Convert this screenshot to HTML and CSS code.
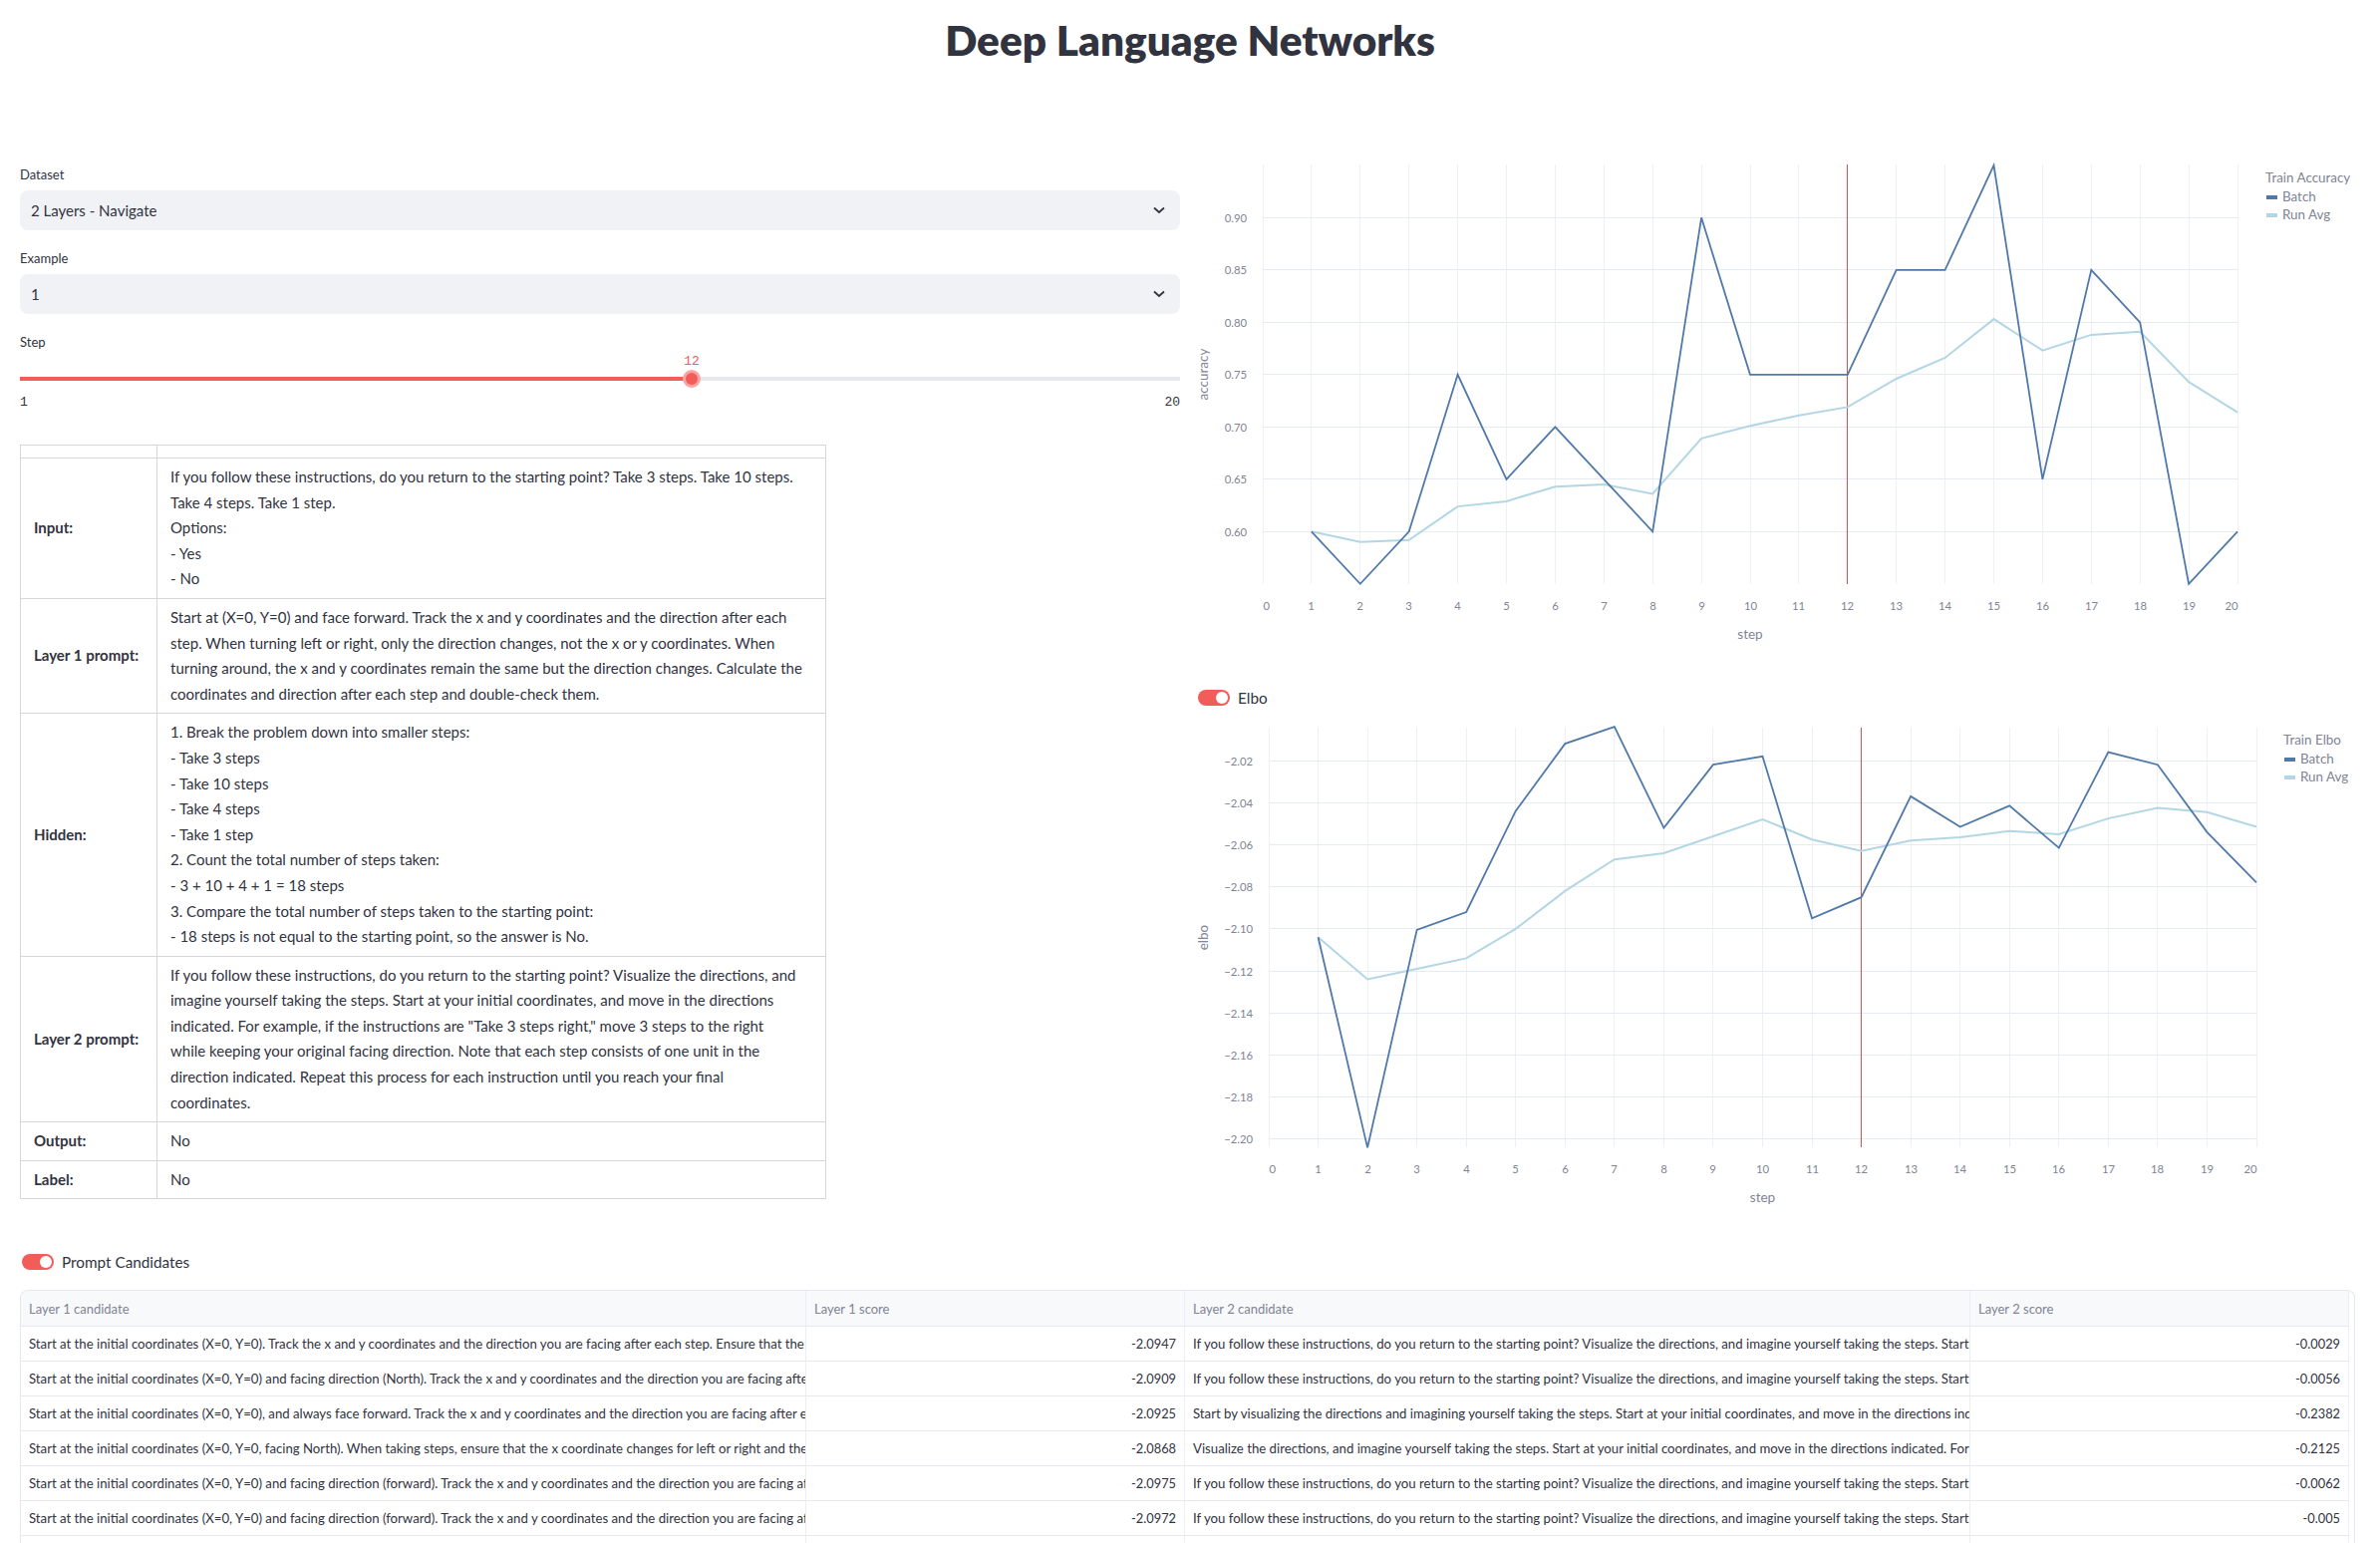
FILE: index.html
```html
<!DOCTYPE html>
<html lang="en">
<head>
  <meta charset="UTF-8">
  <title>Deep Language Networks</title>
  <link rel="stylesheet" href="styles.css">
</head>
<body>
  <h1 class="title">Deep Language Networks</h1>

  <div class="columns">
    <div class="left">
      <div class="field">
        <label class="field-label">Dataset</label>
        <div class="select">
          <span>2 Layers - Navigate</span>
          <svg class="chevron" viewBox="0 0 12 8"><path d="M1 1.5l5 4.5 5-4.5"/></svg>
        </div>
      </div>
      <div class="field">
        <label class="field-label">Example</label>
        <div class="select">
          <span>1</span>
          <svg class="chevron" viewBox="0 0 12 8"><path d="M1 1.5l5 4.5 5-4.5"/></svg>
        </div>
      </div>
      <div class="field">
        <label class="field-label">Step</label>
        <div class="slider">
          <div class="slider-track">
            <div class="slider-fill" style="width: 57.89%;">
              <span class="slider-value">12</span>
              <span class="slider-thumb"></span>
            </div>
          </div>
          <div class="slider-ends"><span>1</span><span>20</span></div>
        </div>
      </div>

      <table class="example-table">
        <tr class="empty-row"><td class="row-name"></td><td></td></tr>
        <tr>
          <td class="row-name">Input:</td>
          <td>If you follow these instructions, do you return to the starting point? Take 3 steps. Take 10 steps.<br>Take 4 steps. Take 1 step.<br>Options:<br>- Yes<br>- No</td>
        </tr>
        <tr>
          <td class="row-name">Layer 1 prompt:</td>
          <td>Start at (X=0, Y=0) and face forward. Track the x and y coordinates and the direction after each<br>step. When turning left or right, only the direction changes, not the x or y coordinates. When<br>turning around, the x and y coordinates remain the same but the direction changes. Calculate the<br>coordinates and direction after each step and double-check them.</td>
        </tr>
        <tr>
          <td class="row-name">Hidden:</td>
          <td>1. Break the problem down into smaller steps:<br>- Take 3 steps<br>- Take 10 steps<br>- Take 4 steps<br>- Take 1 step<br>2. Count the total number of steps taken:<br>- 3 + 10 + 4 + 1 = 18 steps<br>3. Compare the total number of steps taken to the starting point:<br>- 18 steps is not equal to the starting point, so the answer is No.</td>
        </tr>
        <tr>
          <td class="row-name">Layer 2 prompt:</td>
          <td>If you follow these instructions, do you return to the starting point? Visualize the directions, and<br>imagine yourself taking the steps. Start at your initial coordinates, and move in the directions<br>indicated. For example, if the instructions are "Take 3 steps right," move 3 steps to the right<br>while keeping your original facing direction. Note that each step consists of one unit in the<br>direction indicated. Repeat this process for each instruction until you reach your final<br>coordinates.</td>
        </tr>
        <tr><td class="row-name">Output:</td><td>No</td></tr>
        <tr><td class="row-name">Label:</td><td>No</td></tr>
      </table>
    </div>

    <div class="right">
      <svg id="accuracy-chart" class="chart chart-accuracy"></svg>
      <div class="toggle-row toggle-elbo"><span class="toggle"></span><span>Elbo</span></div>
      <svg id="elbo-chart" class="chart chart-elbo"></svg>
    </div>
  </div>

  <div class="toggle-row toggle-prompts"><span class="toggle"></span><span>Prompt Candidates</span></div>

  <div class="grid-wrap">
    <table class="grid">
      <colgroup><col class="col-text"><col class="col-score"><col class="col-text"><col class="col-score"></colgroup>
      <tr>
        <th>Layer 1 candidate</th><th>Layer 1 score</th><th>Layer 2 candidate</th><th>Layer 2 score</th>
      </tr>
      <tr>
        <td>Start at the initial coordinates (X=0, Y=0). Track the x and y coordinates and the direction you are facing after each step. Ensure that the</td><td class="num">-2.0947</td>
        <td>If you follow these instructions, do you return to the starting point? Visualize the directions, and imagine yourself taking the steps. Start at your initial</td><td class="num">-0.0029</td>
      </tr>
      <tr>
        <td>Start at the initial coordinates (X=0, Y=0) and facing direction (North). Track the x and y coordinates and the direction you are facing after each step.</td><td class="num">-2.0909</td>
        <td>If you follow these instructions, do you return to the starting point? Visualize the directions, and imagine yourself taking the steps. Start at your initial</td><td class="num">-0.0056</td>
      </tr>
      <tr>
        <td>Start at the initial coordinates (X=0, Y=0), and always face forward. Track the x and y coordinates and the direction you are facing after each step.</td><td class="num">-2.0925</td>
        <td>Start by visualizing the directions and imagining yourself taking the steps. Start at your initial coordinates, and move in the directions indicated.</td><td class="num">-0.2382</td>
      </tr>
      <tr>
        <td>Start at the initial coordinates (X=0, Y=0, facing North). When taking steps, ensure that the x coordinate changes for left or right and the y coordinate</td><td class="num">-2.0868</td>
        <td>Visualize the directions, and imagine yourself taking the steps. Start at your initial coordinates, and move in the directions indicated. For example,</td><td class="num">-0.2125</td>
      </tr>
      <tr>
        <td>Start at the initial coordinates (X=0, Y=0) and facing direction (forward). Track the x and y coordinates and the direction you are facing after each step.</td><td class="num">-2.0975</td>
        <td>If you follow these instructions, do you return to the starting point? Visualize the directions, and imagine yourself taking the steps. Start at your initial</td><td class="num">-0.0062</td>
      </tr>
      <tr>
        <td>Start at the initial coordinates (X=0, Y=0) and facing direction (forward). Track the x and y coordinates and the direction you are facing after each step.</td><td class="num">-2.0972</td>
        <td>If you follow these instructions, do you return to the starting point? Visualize the directions, and imagine yourself taking the steps. Start at your initial</td><td class="num">-0.005</td>
      </tr>
      <tr><td></td><td></td><td></td><td></td></tr>
    </table>
  </div>

  <script src="chart.js"></script>
</body>
</html>
```

FILE: styles.css
```css
html, body {
  height: 100vh;
  overflow: hidden;
}
body {
  margin: 0;
  padding: 0 20px;
  font-family: "Lato", "Liberation Sans", sans-serif;
  color: #31333f;
  background-color: #ffffff;
}
.title {
  margin: 0 0 70px;
  height: 80px;
  line-height: 80px;
  text-align: center;
  font-size: 42.3px;
  font-weight: 800;
}

.columns {
  display: grid;
  grid-template-columns: 1164px 1fr;
  column-gap: 6px;
  height: 1058px;
}
.left {
  padding-top: 16px;
}

.field {
  margin-bottom: 19px;
}
.field-label {
  display: block;
  height: 18px;
  line-height: 18px;
  margin-bottom: 7px;
  font-size: 13px;
}
.select {
  display: flex;
  justify-content: space-between;
  align-items: center;
  height: 40px;
  padding: 0 15px 0 11px;
  border-radius: 8px;
  background-color: #f0f2f6;
  font-size: 15px;
}
.chevron {
  width: 12px;
  height: 8px;
  fill: none;
  stroke: #31333f;
  stroke-width: 1.8;
}

.slider {
  padding-top: 19px;
}
.slider-track {
  height: 4px;
  background-color: #e6e8ef;
}
.slider-fill {
  position: relative;
  height: 4px;
  background-color: #f25d5a;
}
.slider-thumb {
  position: absolute;
  right: -6px;
  top: -4px;
  width: 12px;
  height: 12px;
  border-radius: 50%;
  background-color: #f25d5a;
  box-shadow: 0 0 0 3px #f9a5a4;
}
.slider-value {
  position: absolute;
  right: -8px;
  top: -23px;
  font-family: "Liberation Mono", monospace;
  font-size: 13px;
  color: #f25d5a;
}
.slider-ends {
  display: flex;
  justify-content: space-between;
  margin-top: 14px;
  font-family: "Liberation Mono", monospace;
  font-size: 13px;
}

.example-table {
  width: 809px;
  margin-top: 35px;
  border-collapse: collapse;
  font-size: 15px;
  line-height: 25.6px;
}
.example-table td {
  padding: 6px 13px;
  border: 1px solid #d6d6d9;
}
.example-table .row-name {
  width: 110px;
  font-weight: 700;
}
.example-table .empty-row td {
  height: 12px;
  padding: 0;
}

.toggle-row {
  display: flex;
  align-items: center;
  gap: 8px;
  height: 16px;
  font-size: 15.3px;
}
.toggle {
  position: relative;
  width: 32px;
  height: 16px;
  border-radius: 8px;
  background-color: #f25d5a;
}
.toggle::after {
  content: "";
  position: absolute;
  right: 2px;
  top: 2px;
  width: 12px;
  height: 12px;
  border-radius: 50%;
  background-color: #ffffff;
}
.toggle-elbo {
  margin: 42px 0 0 12px;
}
.toggle-prompts {
  margin: 50px 0 20px 2px;
}

.chart {
  display: block;
  width: 1178px;
}
.chart-accuracy {
  height: 500px;
}
.chart-elbo {
  height: 500px;
}
.chart text {
  font-family: "Lato", "Liberation Sans", sans-serif;
  fill: #808495;
}
.tick-label {
  font-size: 11.3px;
}
.axis-title {
  font-size: 13.5px;
}
.legend-text {
  font-size: 13.4px;
}
.grid-h {
  stroke: #e6eaf1;
  stroke-width: 1;
}
.grid-v {
  stroke: #eef0f5;
  stroke-width: 1;
}
.marker {
  stroke: #ea4a48;
  stroke-width: 1;
}
.line {
  fill: none;
  stroke-linejoin: miter;
}
.batch {
  stroke: #5079aa;
  stroke-width: 1.8;
}
.run-avg {
  stroke: #b3d6e5;
  stroke-width: 2;
}
.swatch-batch {
  fill: #5079aa;
}
.swatch-avg {
  fill: #b3d6e5;
}

.grid-wrap {
  width: 2341px;
  border: 1px solid #e6e8ee;
  border-bottom: none;
  border-radius: 8px 8px 0 0;
  overflow: hidden;
}
.grid {
  width: 2336px;
  table-layout: fixed;
  border-collapse: separate;
  border-spacing: 0;
  font-size: 13.2px;
}
.col-text {
  width: 788px;
}
.col-score {
  width: 380px;
}
.grid th, .grid td {
  height: 34px;
  padding: 0 8px;
  overflow: hidden;
  white-space: nowrap;
  text-align: left;
  font-weight: 400;
  border-right: 1px solid #eceef3;
  border-bottom: 1px solid #e6e8ee;
}
.grid th {
  height: 35px;
  font-size: 13px;
  color: #808495;
  background-color: #f8f9fb;
}
.grid .num {
  text-align: right;
  font-size: 12.8px;
}
```

FILE: chart.js
```js
const SVG_NS = 'http://www.w3.org/2000/svg';
const STEPS = 20;

function add(svg, tag, attrs, text) {
  const el = document.createElementNS(SVG_NS, tag);
  Object.keys(attrs).forEach(key => el.setAttribute(key, attrs[key]));
  if (text !== undefined) el.textContent = text;
  svg.appendChild(el);
  return el;
}

// keep 1px lines on a whole pixel
const crisp = v => Math.floor(v) + 0.5;

function drawChart(svg, cfg) {
  const xAt = step => cfg.x0 + step * cfg.unit;
  const yAt = value => cfg.yRef + (cfg.ref - value) * cfg.scale;
  const x1 = xAt(STEPS);

  // vertical grid and step labels
  for (let step = 0; step <= STEPS; step++) {
    const x = crisp(xAt(step));
    add(svg, 'line', { class: 'grid-v', x1: x, x2: x, y1: cfg.top, y2: cfg.bottom });
    const anchor = step === 0 ? 'start' : step === STEPS ? 'end' : 'middle';
    add(svg, 'text', { class: 'tick-label', x: x, y: cfg.bottom + 26, 'text-anchor': anchor }, step);
  }

  // horizontal grid and value labels
  cfg.ticks.forEach(value => {
    const y = crisp(yAt(value));
    add(svg, 'line', { class: 'grid-h', x1: cfg.x0, x2: x1, y1: y, y2: y });
    const label = value.toFixed(2).replace('-', '\u2212');
    add(svg, 'text', { class: 'tick-label', x: cfg.x0 - 16, y: y + 4, 'text-anchor': 'end' }, label);
  });

  add(svg, 'text', {
    class: 'axis-title',
    'text-anchor': 'middle',
    transform: `translate(22 ${(cfg.top + cfg.bottom) / 2}) rotate(-90)`
  }, cfg.yTitle);
  add(svg, 'text', {
    class: 'axis-title',
    x: (cfg.x0 + x1) / 2,
    y: cfg.bottom + 55,
    'text-anchor': 'middle'
  }, 'step');

  // step marker sits under the data lines
  const mx = crisp(xAt(12));
  add(svg, 'line', { class: 'marker', x1: mx, x2: mx, y1: cfg.top, y2: cfg.bottom });

  [['run-avg', cfg.runAvg], ['batch', cfg.batch]].forEach(([name, values]) => {
    const points = values.map((value, i) => `${xAt(i + 1)},${yAt(value).toFixed(1)}`).join(' ');
    add(svg, 'polyline', { class: `line ${name}`, points: points });
  });

  // legend
  const lx = cfg.legendX;
  const row1 = cfg.legendY + cfg.rowGap + 1;
  const row2 = row1 + cfg.rowGap;
  add(svg, 'text', { class: 'legend-text', x: lx, y: cfg.legendY }, cfg.legendTitle);
  add(svg, 'rect', { class: 'swatch-batch', x: lx + 1, y: row1 - 6, width: 11, height: 4 });
  add(svg, 'text', { class: 'legend-text', x: lx + 17, y: row1 }, 'Batch');
  add(svg, 'rect', { class: 'swatch-avg', x: lx + 1, y: row2 - 6, width: 11, height: 4 });
  add(svg, 'text', { class: 'legend-text', x: lx + 17, y: row2 }, 'Run Avg');
}

drawChart(document.getElementById('accuracy-chart'), {
  x0: 77, unit: 48.9, top: 15, bottom: 436,
  ref: 0.9, yRef: 68.3, scale: 1050,
  ticks: [0.9, 0.85, 0.8, 0.75, 0.7, 0.65, 0.6],
  yTitle: 'accuracy',
  legendTitle: 'Train Accuracy', legendX: 1083, legendY: 33, rowGap: 18,
  batch: [0.6, 0.55, 0.6, 0.75, 0.65, 0.7, 0.65, 0.6, 0.9, 0.75, 0.75, 0.75, 0.85, 0.85, 0.95, 0.65, 0.85, 0.8, 0.55, 0.6],
  runAvg: [0.6, 0.59, 0.592, 0.624, 0.629, 0.643, 0.645, 0.636, 0.689, 0.701, 0.711, 0.719, 0.746, 0.766, 0.803, 0.773, 0.788, 0.791, 0.743, 0.714]
});

drawChart(document.getElementById('elbo-chart'), {
  x0: 83, unit: 49.55, top: 22, bottom: 443,
  ref: -2.02, yRef: 55, scale: 2111,
  ticks: [-2.02, -2.04, -2.06, -2.08, -2.1, -2.12, -2.14, -2.16, -2.18, -2.2],
  yTitle: 'elbo',
  legendTitle: 'Train Elbo', legendX: 1101, legendY: 39, rowGap: 18,
  batch: [-2.104, -2.204, -2.1005, -2.092, -2.044, -2.012, -2.004, -2.052, -2.022, -2.018, -2.095, -2.085, -2.037, -2.0515, -2.0415, -2.0615, -2.016, -2.022, -2.054, -2.078],
  runAvg: [-2.104, -2.124, -2.119, -2.114, -2.1, -2.082, -2.067, -2.064, -2.056, -2.048, -2.0575, -2.063, -2.058, -2.0565, -2.0535, -2.055, -2.0475, -2.0425, -2.0445, -2.0515]
});
```
